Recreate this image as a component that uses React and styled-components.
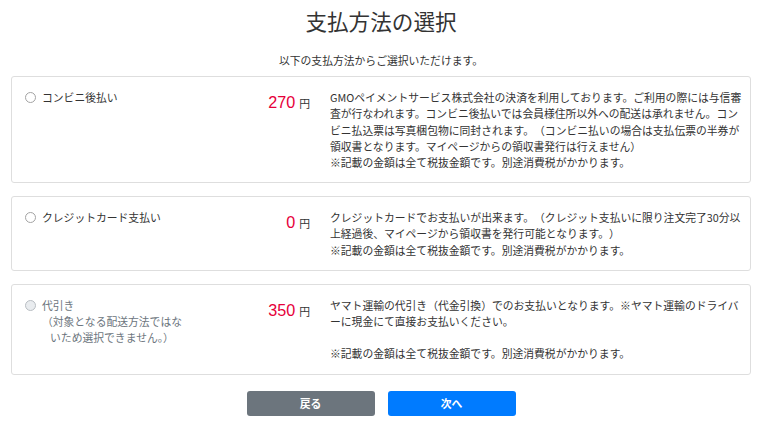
import React from 'react';
import styled, { createGlobalStyle } from 'styled-components';

const GlobalStyle = createGlobalStyle`
  body {
    margin: 0;
    background: #fff;
    color: #333;
    font-family: "Noto Sans CJK JP", "Noto Sans", sans-serif;
  }
`;

const Page = styled.div`
  width: 740px;
  margin-left: 11px;
  padding-top: 8px;
`;

const Title = styled.h1`
  margin: 0;
  font-size: 21.6px;
  line-height: 26px;
  font-weight: 400;
  text-align: center;
  color: #333;
`;

const Lead = styled.p`
  margin: 18px 0 8px;
  font-size: 10.8px;
  line-height: 16.2px;
  text-align: center;
`;

const MethodList = styled.div`
  display: flex;
  flex-direction: column;
  gap: 13px;
`;

const MethodCard = styled.div`
  display: grid;
  grid-template-columns: 160px 1fr 416px;
  column-gap: 20px;
  padding: 12px 4px 12px 13px;
  border: 1px solid #dedede;
  border-radius: 3px;
  font-size: 10.8px;
  line-height: 16.2px;
`;

const OptionCol = styled.div`
  display: flex;
  flex-direction: column;
  color: ${(props) => (props.disabled ? '#6c757d' : '#333')};
`;

const OptionRow = styled.label`
  display: flex;
  align-items: flex-start;
  gap: 6px;
`;

const RadioMark = styled.span`
  flex: none;
  width: 9px;
  height: 9px;
  margin-top: 3px;
  border: 1px solid ${(props) => (props.disabled ? '#b9bec3' : '#a3a3a3')};
  border-radius: 50%;
  background: ${(props) => (props.disabled ? '#e9ecef' : '#fff')};
`;

const Note = styled.div`
  width: 144px;
  margin-left: 15px;
  text-align: center;
`;

const Price = styled.div`
  display: flex;
  justify-content: flex-end;
  align-items: baseline;
  padding-top: 1px;
`;

const Amount = styled.span`
  font-family: "Liberation Sans", "Noto Sans", sans-serif;
  font-size: 16.2px;
  line-height: 1.5;
  color: #e6003a;
`;

const Yen = styled.span`
  margin-left: 4px;
  font-size: 10.8px;
  color: #333;
`;

const Description = styled.div`
  line-break: normal;
  text-spacing-trim: space-all;
  color: #333;
`;

const ButtonRow = styled.div`
  display: flex;
  justify-content: center;
  gap: 13px;
  margin-top: 16px;
`;

const ActionButton = styled.button`
  width: 128px;
  height: 25px;
  border: none;
  border-radius: 3px;
  background: ${(props) => (props.primary ? '#007bff' : '#6c757d')};
  color: #fff;
  font-family: "Noto Sans CJK JP", sans-serif;
  font-size: 10.8px;
  font-weight: 700;
  cursor: pointer;
`;

const methods = [
  {
    name: 'コンビニ後払い',
    price: '270',
    text: [
      'GMOペイメントサービス株式会社の決済を利用しております。ご利用の際には与信審査が行なわれます。コンビニ後払いでは会員様住所以外への配送は承れません。コンビニ払込票は写真梱包物に同封されます。（コンビニ払いの場合は支払伝票の半券が領収書となります。マイページからの領収書発行は行えません）',
      '※記載の金額は全て税抜金額です。別途消費税がかかります。',
    ],
  },
  {
    name: 'クレジットカード支払い',
    price: '0',
    text: [
      'クレジットカードでお支払いが出来ます。（クレジット支払いに限り注文完了30分以上経過後、マイページから領収書を発行可能となります。）',
      '※記載の金額は全て税抜金額です。別途消費税がかかります。',
    ],
  },
  {
    name: '代引き',
    note: '（対象となる配送方法ではないため選択できません。）',
    disabled: true,
    price: '350',
    text: [
      'ヤマト運輸の代引き（代金引換）でのお支払いとなります。※ヤマト運輸のドライバーに現金にて直接お支払いください。',
      '',
      '※記載の金額は全て税抜金額です。別途消費税がかかります。',
    ],
  },
];

function App() {
  return (
    <>
      <GlobalStyle />
      <Page>
        <Title>支払方法の選択</Title>
        <Lead>以下の支払方法からご選択いただけます。</Lead>
        <MethodList>
          {methods.map((item, index) => (
            <MethodCard key={index}>
              <OptionCol disabled={item.disabled}>
                <OptionRow>
                  <RadioMark disabled={item.disabled} />
                  <span>{item.name}</span>
                </OptionRow>
                {item.note && <Note>{item.note}</Note>}
              </OptionCol>
              <Price>
                <Amount>{item.price}</Amount>
                <Yen>円</Yen>
              </Price>
              <Description>
                {item.text.map((line, i) => (
                  <React.Fragment key={i}>
                    {i > 0 && <br />}
                    {line}
                  </React.Fragment>
                ))}
              </Description>
            </MethodCard>
          ))}
        </MethodList>
        <ButtonRow>
          <ActionButton>戻る</ActionButton>
          <ActionButton primary>次へ</ActionButton>
        </ButtonRow>
      </Page>
    </>
  );
}

export default App;
